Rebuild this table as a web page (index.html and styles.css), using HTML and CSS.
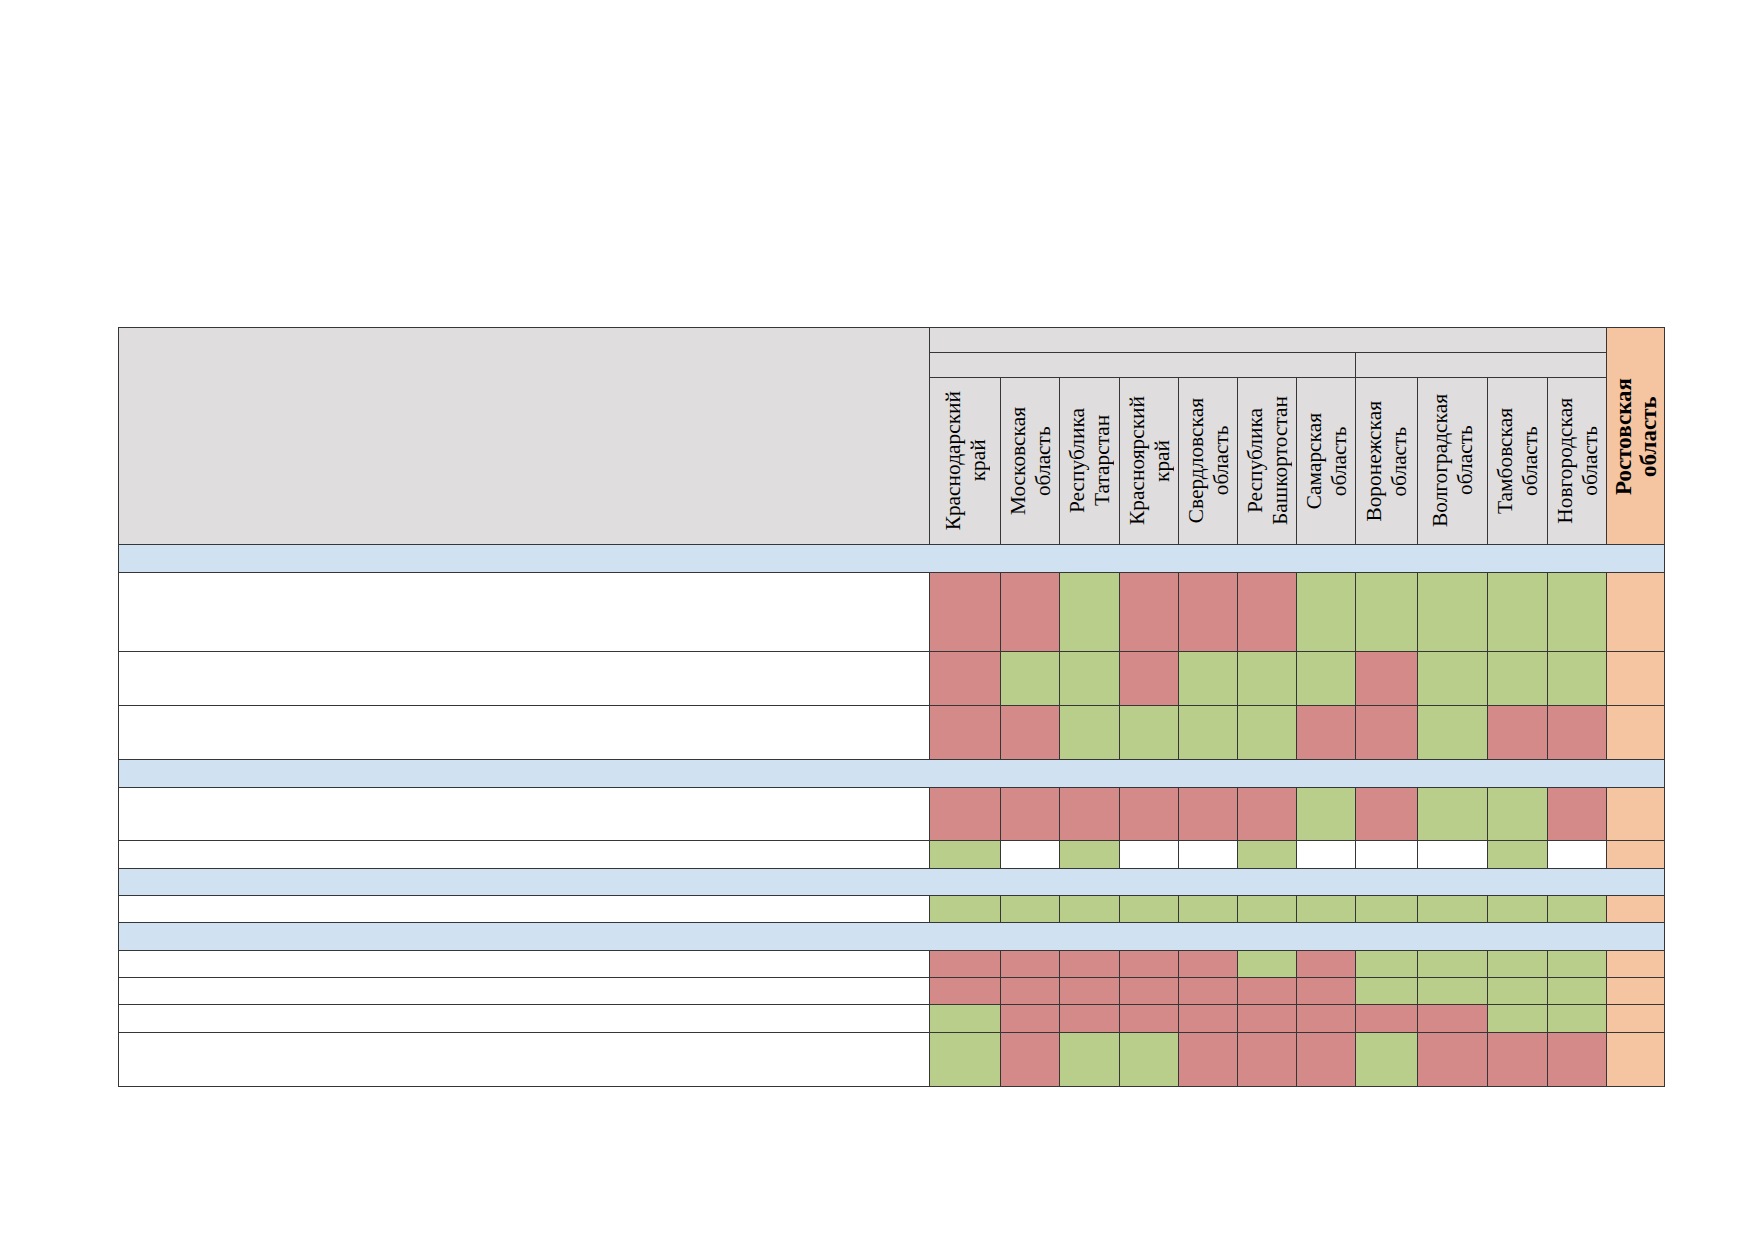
FILE: index.html
```html
<!DOCTYPE html>
<html lang="ru">
<head>
<meta charset="utf-8">
<title>Таблица регионов</title>
<link rel="stylesheet" href="styles.css">
</head>
<body>
<div class="page">
<table class="grid">
  <colgroup>
    <col class="c-name">
    <col class="c71"><col class="c59"><col class="c60"><col class="c59"><col class="c59"><col class="c59"><col class="c59">
    <col class="c62"><col class="c70"><col class="c60"><col class="c59"><col class="c58">
  </colgroup>
  <thead>
    <tr class="h25">
      <th class="gray" rowspan="3"></th>
      <th class="gray" colspan="11"></th>
      <th class="orange" rowspan="3"><div class="vbox"><span class="vt bold">Ростовская<br>область</span></div></th>
    </tr>
    <tr class="h25">
      <th class="gray" colspan="7"></th>
      <th class="gray" colspan="4"></th>
    </tr>
    <tr class="h167">
      <th class="gray"><div class="vbox"><span class="vt">Краснодарский<br>край</span></div></th>
      <th class="gray"><div class="vbox"><span class="vt">Московская<br>область</span></div></th>
      <th class="gray"><div class="vbox"><span class="vt">Республика<br>Татарстан</span></div></th>
      <th class="gray"><div class="vbox"><span class="vt">Красноярский<br>край</span></div></th>
      <th class="gray"><div class="vbox"><span class="vt">Свердловская<br>область</span></div></th>
      <th class="gray"><div class="vbox"><span class="vt">Республика<br>Башкортостан</span></div></th>
      <th class="gray"><div class="vbox"><span class="vt">Самарская<br>область</span></div></th>
      <th class="gray"><div class="vbox"><span class="vt">Воронежская<br>область</span></div></th>
      <th class="gray"><div class="vbox"><span class="vt">Волгоградская<br>область</span></div></th>
      <th class="gray"><div class="vbox"><span class="vt">Тамбовская<br>область</span></div></th>
      <th class="gray"><div class="vbox"><span class="vt">Новгородская<br>область</span></div></th>
    </tr>
  </thead>
  <tbody>
    <tr class="h28"><td class="blue" colspan="13"></td></tr>
    <tr class="h79">
      <td></td>
      <td class="r"></td><td class="r"></td><td class="g"></td><td class="r"></td><td class="r"></td><td class="r"></td><td class="g"></td><td class="g"></td><td class="g"></td><td class="g"></td><td class="g"></td>
      <td class="orange"></td>
    </tr>
    <tr class="h54">
      <td></td>
      <td class="r"></td><td class="g"></td><td class="g"></td><td class="r"></td><td class="g"></td><td class="g"></td><td class="g"></td><td class="r"></td><td class="g"></td><td class="g"></td><td class="g"></td>
      <td class="orange"></td>
    </tr>
    <tr class="h54">
      <td></td>
      <td class="r"></td><td class="r"></td><td class="g"></td><td class="g"></td><td class="g"></td><td class="g"></td><td class="r"></td><td class="r"></td><td class="g"></td><td class="r"></td><td class="r"></td>
      <td class="orange"></td>
    </tr>
    <tr class="h28"><td class="blue" colspan="13"></td></tr>
    <tr class="h53">
      <td></td>
      <td class="r"></td><td class="r"></td><td class="r"></td><td class="r"></td><td class="r"></td><td class="r"></td><td class="g"></td><td class="r"></td><td class="g"></td><td class="g"></td><td class="r"></td>
      <td class="orange"></td>
    </tr>
    <tr class="h28">
      <td></td>
      <td class="g"></td><td></td><td class="g"></td><td></td><td></td><td class="g"></td><td></td><td></td><td></td><td class="g"></td><td></td>
      <td class="orange"></td>
    </tr>
    <tr class="h27"><td class="blue" colspan="13"></td></tr>
    <tr class="h27">
      <td></td>
      <td class="g"></td><td class="g"></td><td class="g"></td><td class="g"></td><td class="g"></td><td class="g"></td><td class="g"></td><td class="g"></td><td class="g"></td><td class="g"></td><td class="g"></td>
      <td class="orange"></td>
    </tr>
    <tr class="h28"><td class="blue" colspan="13"></td></tr>
    <tr class="h27">
      <td></td>
      <td class="r"></td><td class="r"></td><td class="r"></td><td class="r"></td><td class="r"></td><td class="g"></td><td class="r"></td><td class="g"></td><td class="g"></td><td class="g"></td><td class="g"></td>
      <td class="orange"></td>
    </tr>
    <tr class="h27">
      <td></td>
      <td class="r"></td><td class="r"></td><td class="r"></td><td class="r"></td><td class="r"></td><td class="r"></td><td class="r"></td><td class="g"></td><td class="g"></td><td class="g"></td><td class="g"></td>
      <td class="orange"></td>
    </tr>
    <tr class="h28">
      <td></td>
      <td class="g"></td><td class="r"></td><td class="r"></td><td class="r"></td><td class="r"></td><td class="r"></td><td class="r"></td><td class="r"></td><td class="r"></td><td class="g"></td><td class="g"></td>
      <td class="orange"></td>
    </tr>
    <tr class="h54">
      <td></td>
      <td class="g"></td><td class="r"></td><td class="g"></td><td class="g"></td><td class="r"></td><td class="r"></td><td class="r"></td><td class="g"></td><td class="r"></td><td class="r"></td><td class="r"></td>
      <td class="orange"></td>
    </tr>
  </tbody>
</table>
</div>
</body>
</html>
```

FILE: styles.css
```css
html, body {
  margin: 0;
  padding: 0;
  background: #ffffff;
}

.page {
  padding: 327px 0 0 118px;
  font-family: "Liberation Serif", "Times New Roman", serif;
  color: #000;
}

.grid {
  border-collapse: collapse;
  table-layout: fixed;
  width: 1546px;
  border: 1px solid #333;
}

.grid th,
.grid td {
  border: 1px solid #363636;
  padding: 0;
  background: #ffffff;
  font-weight: normal;
}

.c-name { width: 811px; }
.c71 { width: 71px; }
.c70 { width: 70px; }
.c62 { width: 62px; }
.c60 { width: 60px; }
.c59 { width: 59px; }
.c58 { width: 58px; }

.h25 { height: 25px; }
.h27 { height: 27px; }
.h28 { height: 28px; }
.h53 { height: 53px; }
.h54 { height: 54px; }
.h79 { height: 79px; }
.h167 { height: 167px; }

.grid .gray { background: #dfdddd; }
.grid .blue { background: #d0e1f2; }
.grid .orange { background: #f5c4a0; }
.grid .r { background: #d48a88; }
.grid .g { background: #b8ce8a; }

.vbox {
  display: flex;
  align-items: center;
  justify-content: center;
  height: 100%;
}

.vt {
  writing-mode: vertical-rl;
  transform: rotate(180deg);
  text-align: center;
  font-size: 21.4px;
  line-height: 24.5px;
  white-space: nowrap;
}

.vt.bold {
  font-weight: bold;
  font-size: 23px;
  line-height: 25px;
}
```
